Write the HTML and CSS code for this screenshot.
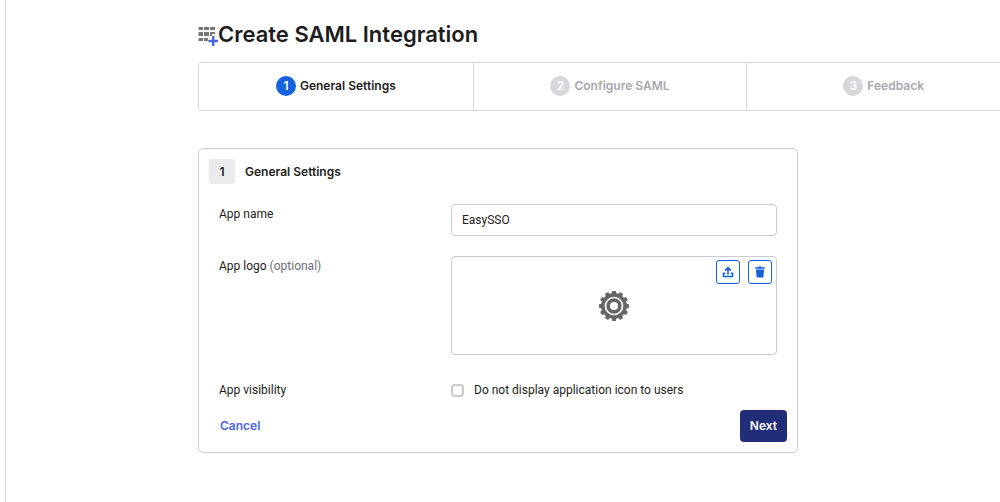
FILE: index.html
```
<!DOCTYPE html>
<html lang="en">
  <head>
    <meta charset="UTF-8" />
    <meta name="viewport" content="width=device-width, initial-scale=1.0" />
    <title>Create SAML Integration</title>
    <link rel="stylesheet" href="styles.css">
  </head>
  <body>
    <main class="page">
      <h1 class="page-title">
        <svg class="title-icon" viewBox="0 0 20 20" aria-hidden="true">
          <path fill="#777" d="M.5 1H5v3H.5zM6 1h5v3H6zM12 1h5v3h-5zM.5 6H5v4H.5zM6 6h5v4H6zM12 6h5v2h-3v2h-2zM.5 12H5v3H.5zM6 12h4v3H6z" />
          <path fill="#4c64e1" d="M14 10h2.4v3.8H20v2.4h-3.6V20H14v-3.8h-3.6v-2.4H14z" />
        </svg>
        <span>Create SAML Integration</span>
      </h1>

      <ol class="steps">
        <li class="step active"><span class="step-num">1</span>General Settings</li>
        <li class="step"><span class="step-num">2</span>Configure SAML</li>
        <li class="step"><span class="step-num">3</span>Feedback</li>
      </ol>

      <form class="card">
        <h2 class="card-title"><span class="card-num">1</span>General Settings</h2>

        <div class="row">
          <label class="row-label" for="app-name">App name</label>
          <input class="text-input" id="app-name" type="text" value="EasySSO" />
        </div>

        <div class="row">
          <div class="row-label">App logo <span class="optional">(optional)</span></div>
          <div class="logo-box">
            <svg class="gear" viewBox="0 0 30 30" aria-hidden="true">
              <g fill="#666">
                <path id="tooth" d="M12.4 4L13.2 0h3.6l.8 4v22l-.8 4h-3.6l-.8-4z" />
                <use href="#tooth" transform="rotate(30 15 15)" />
                <use href="#tooth" transform="rotate(60 15 15)" />
                <use href="#tooth" transform="rotate(90 15 15)" />
                <use href="#tooth" transform="rotate(120 15 15)" />
                <use href="#tooth" transform="rotate(150 15 15)" />
              </g>
              <circle cx="15" cy="15" r="12.9" fill="#666" />
              <circle cx="15" cy="15" r="8.5" fill="#666" stroke="#fff" stroke-width="1.7" />
              <circle cx="15" cy="15" r="4" fill="#fff" />
            </svg>
            <div class="logo-actions">
              <button class="icon-btn" type="button" aria-label="Upload logo">
                <svg viewBox="0 0 12 12" aria-hidden="true">
                  <path fill="none" stroke="currentColor" stroke-width="1.6" d="M6 8.5V2M3 4.6L6 1.6l3 3M3.2 7.2H1.5v3.3h9V7.2H8.8" />
                </svg>
              </button>
              <button class="icon-btn" type="button" aria-label="Delete logo">
                <svg viewBox="0 0 12 12" aria-hidden="true">
                  <path fill="currentColor" d="M4.2.5h3.6v.7h3v1.6H1.2V1.2h3zM1.9 3.6h8.2l-.8 7.9H2.7z" />
                </svg>
              </button>
            </div>
          </div>
        </div>

        <div class="row row-check">
          <div class="row-label">App visibility</div>
          <label class="check"><input type="checkbox" />Do not display application icon to users</label>
        </div>

        <div class="card-footer">
          <a class="cancel" href="#">Cancel</a>
          <button class="next" type="submit">Next</button>
        </div>
      </form>
    </main>
  </body>
</html>
```
FILE: styles.css
```
* {
  box-sizing: border-box;
}

body {
  margin: 0;
  background: #fff;
  color: #1d1d21;
  font-family: Inter, "Liberation Sans", sans-serif;
  font-size: 12px;
  line-height: 20px;
  overflow-x: hidden;
}

.page {
  min-height: 100vh;
  margin-left: 5px;
  padding: 18px 0 24px 192px;
  border-left: 1px solid #d8d8d8;
}

.page-title {
  display: flex;
  align-items: center;
  margin: 0 0 12px;
  font-size: 22px;
  font-weight: 600;
  line-height: 32px;
}

.title-icon {
  width: 20px;
  height: 20px;
  margin-top: 4px;
}

/* the last step runs past the edge of the window */
.steps {
  display: grid;
  grid-template-columns: repeat(3, 1fr);
  margin: 0 -21px 37px 0;
  padding: 0;
  list-style: none;
  border: 1px solid #d8d8dc;
  border-radius: 4px;
}

.step {
  display: flex;
  align-items: center;
  justify-content: center;
  gap: 4px;
  padding: 13px 0 14px;
  color: #a7a7b0;
  font-weight: 600;
}

.step + .step {
  border-left: 1px solid #d8d8dc;
}

.step-num {
  width: 20px;
  height: 20px;
  border-radius: 50%;
  background: #d7d7dc;
  color: #fff;
  text-align: center;
}

.step.active {
  color: #1d1d21;
}

.step.active .step-num {
  background: #1662dd;
}

.card {
  max-width: 600px;
  padding: 10px;
  border: 1px solid #cfcfd3;
  border-radius: 5px;
}

.card-title {
  display: flex;
  align-items: center;
  gap: 10px;
  margin: 0 0 20px;
  font-size: 12px;
  font-weight: 600;
}

.card-num {
  width: 26px;
  border-radius: 3px;
  background: #ebebed;
  line-height: 25px;
  text-align: center;
}

.row {
  display: grid;
  grid-template-columns: 232px 1fr;
  margin: 0 10px 20px;
  font-family: Roboto, "Liberation Sans", sans-serif;
}

.optional {
  color: #6e6e78;
}

.text-input {
  width: 100%;
  height: 32px;
  padding: 0 10px;
  border: 1px solid #c9c9ce;
  border-radius: 4px;
  color: inherit;
  font: inherit;
}

.logo-box {
  position: relative;
  display: flex;
  align-items: center;
  justify-content: center;
  height: 99px;
  border: 1px solid #c9c9ce;
  border-radius: 4px;
}

.gear {
  width: 30px;
  height: 30px;
}

.logo-actions {
  position: absolute;
  top: 3px;
  right: 4px;
  display: flex;
  gap: 8px;
}

.icon-btn {
  display: flex;
  align-items: center;
  justify-content: center;
  width: 24px;
  height: 24px;
  padding: 0;
  border: 1px solid #1662dd;
  border-radius: 3px;
  background: #fff;
  color: #1662dd;
  cursor: pointer;
}

.icon-btn svg {
  width: 12px;
  height: 12px;
}

.row-check {
  margin-top: 25px;
  margin-bottom: 10px;
}

.check {
  display: flex;
  align-items: center;
  gap: 10px;
}

.check input {
  appearance: none;
  width: 13px;
  height: 13px;
  margin: 0;
  border: 2px solid #c9c9ce;
  border-radius: 4px;
}

.check input:checked {
  border-color: #1662dd;
  background: #1662dd;
}

.card-footer {
  display: flex;
  align-items: center;
  justify-content: space-between;
  padding-left: 11px;
}

.cancel {
  color: #4c64e1;
  font-weight: 600;
  text-decoration: none;
}

.next {
  height: 32px;
  padding: 0 10px;
  border: none;
  border-radius: 4px;
  background: #212d78;
  color: #fff;
  font: inherit;
  font-weight: 600;
  cursor: pointer;
}
```
